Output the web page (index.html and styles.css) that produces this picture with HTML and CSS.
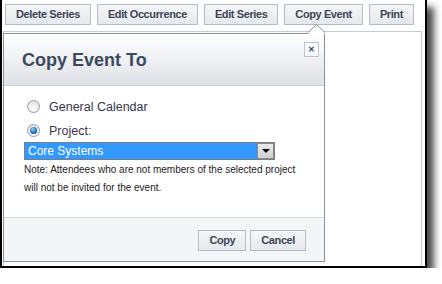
FILE: index.html
```html
<!DOCTYPE html>
<html>
<head>
<meta charset="utf-8">
<link rel="stylesheet" href="styles.css">
</head>
<body>
<div class="frame">
  <div class="toolbar">
    <button class="btn">Delete Series</button>
    <button class="btn">Edit Occurrence</button>
    <button class="btn">Edit Series</button>
    <button class="btn">Copy Event</button>
    <button class="btn">Print</button>
  </div>
  <div class="page"></div>

  <svg class="pointer" width="19" height="10" viewBox="0 0 19 10">
    <polygon points="0.5,10 9.5,1 18.5,10" fill="#ffffff"/>
    <polyline points="0.5,9 9.5,0.5 18.5,9" fill="none" stroke="#8891a0" stroke-width="1"/>
  </svg>

  <div class="popup">
    <div class="popup-head">
      <h1 class="title">Copy Event To</h1>
      <span class="close">&#x2715;</span>
    </div>
    <div class="popup-body">
      <label class="opt"><span class="radio"></span>General Calendar</label>
      <label class="opt"><span class="radio checked"></span>Project:</label>
      <div class="select">
        <span class="select-text">Core Systems</span>
        <span class="select-btn"><span class="tri"></span></span>
      </div>
      <p class="note">Note: Attendees who are not members of the selected project<br>will not be invited for the event.</p>
    </div>
    <div class="popup-foot">
      <button class="btn">Copy</button>
      <button class="btn">Cancel</button>
    </div>
  </div>
</div>
</body>
</html>
```
FILE: styles.css
```css
html, body {
  margin: 0;
  padding: 0;
  background: #ffffff;
}

.frame {
  position: relative;
  width: 423px;
  height: 266px;
  border: 2px solid #000;
  border-top: 0;
  background: #fff;
  box-shadow: 7px 7px 7px rgba(0, 0, 0, 0.7);
  display: flex;
  flex-direction: column;
  font-family: "Liberation Sans", Arial, sans-serif;
}

.toolbar {
  display: flex;
  gap: 6px;
  padding: 4px 0 0 3px;
}

.btn {
  height: 21px;
  padding: 0 10px;
  margin: 0;
  border: 1px solid #b3bcc9;
  border-radius: 0;
  background: linear-gradient(#f5f6f8, #e6e9ed);
  font-family: "Liberation Sans", Arial, sans-serif;
  font-size: 11px;
  font-weight: bold;
  letter-spacing: -0.4px;
  color: #3b4657;
  line-height: 19px;
}

.page {
  flex: 1;
  margin: 6px 3px 0 1px;
  border: 1px solid #c6ccd5;
  border-bottom: 0;
}

.pointer {
  position: absolute;
  left: 305px;
  top: 24px;
  z-index: 2;
}

.popup {
  position: absolute;
  left: 1px;
  top: 33px;
  width: 320px;
  height: 227px;
  border: 1px solid #8891a0;
  background: #fff;
  display: flex;
  flex-direction: column;
  z-index: 1;
}

.popup-head {
  position: relative;
  border-bottom: 1px solid #cdd2d9;
  background: linear-gradient(#ffffff, #dee1e6);
  display: flex;
  align-items: center;
  padding: 2px 0 0 18px;
  box-sizing: border-box;
  height: 52px;
}

.title {
  margin: 0;
  font-size: 18px;
  font-weight: bold;
  color: #3b4a5e;
}

.close {
  position: absolute;
  top: 8px;
  right: 5px;
  width: 13px;
  height: 13px;
  border: 1px solid #bcc3cc;
  background: #f7f8f9;
  color: #2e4a78;
  font-size: 8px;
  font-weight: bold;
  line-height: 13px;
  text-align: center;
}

.popup-body {
  flex: 1;
  padding: 12px 0 0 20px;
  display: flex;
  flex-direction: column;
}

.opt {
  display: flex;
  align-items: center;
  height: 17px;
  margin-bottom: 7px;
  font-size: 12.5px;
  color: #3a364b;
}

.radio {
  position: relative;
  width: 11px;
  height: 11px;
  margin: 0 9px 0 3px;
  border: 1px solid #9a9ca2;
  border-radius: 50%;
  background: radial-gradient(circle at 50% 70%, #ffffff, #d9d9dc);
}

.radio.checked::after {
  content: "";
  position: absolute;
  left: 2px;
  top: 2px;
  width: 7px;
  height: 7px;
  border-radius: 50%;
  background: radial-gradient(circle at 40% 35%, #8fd0ff, #0d5a9c 70%, #0a3f6e);
}

.select {
  margin-top: -4px;
  width: 251px;
  height: 18px;
  box-sizing: border-box;
  border: 1px solid #7b7d82;
  display: flex;
  background: #3399ff;
}

.select-text {
  flex: 1;
  color: #fff;
  font-size: 12px;
  line-height: 16px;
  padding-left: 3px;
}

.select-btn {
  width: 17px;
  height: 16px;
  box-sizing: border-box;
  border: 1px solid #8a8a8a;
  background: linear-gradient(#ececec, #cfcfcf);
  display: flex;
  align-items: center;
  justify-content: center;
}

.tri {
  width: 0;
  height: 0;
  border-left: 4px solid transparent;
  border-right: 4px solid transparent;
  border-top: 4px solid #000;
}

.note {
  margin: 1px 0 0 0;
  font-size: 10px;
  line-height: 18px;
  color: #222;
}

.popup-foot {
  height: 44px;
  box-sizing: border-box;
  border-top: 1px solid #d8dbe0;
  background: #f4f5f7;
  display: flex;
  justify-content: flex-end;
  align-items: flex-start;
  gap: 4px;
  padding: 12px 18px 0 0;
}
```
